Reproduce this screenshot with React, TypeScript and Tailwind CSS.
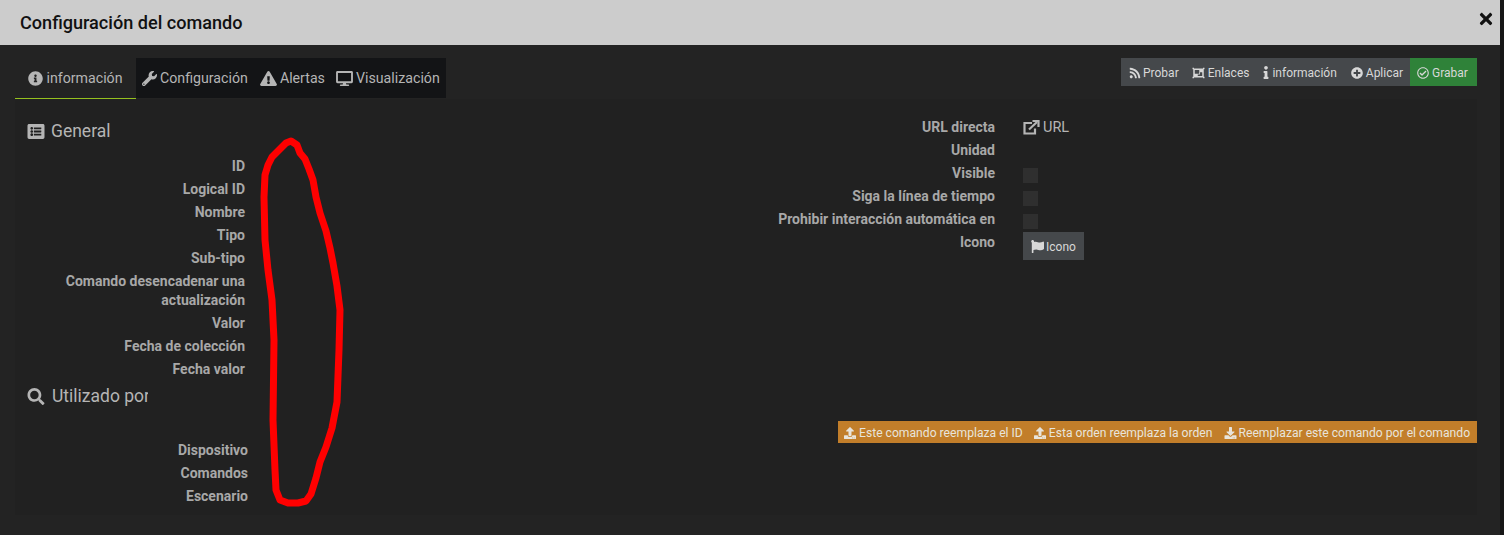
import React from "react";
import { FaInfoCircle, FaWrench, FaExclamationTriangle, FaDesktop, FaListAlt, FaSearch, FaRss, FaObjectGroup, FaInfo, FaPlusCircle, FaRegCheckCircle, FaFlag, FaUpload, FaDownload, FaTimes } from "react-icons/fa";

const font = "font-['Roboto',sans-serif]";

function Row({ label }: { label: React.ReactNode }) {
  return <div className="text-right font-bold text-[14px] leading-[19px] text-[#a8a8a8] mb-[4px]">{label}</div>;
}

function Btn({ icon, children, cls = "" }: { icon: React.ReactNode; children: React.ReactNode; cls?: string }) {
  return <span className={`flex items-center gap-[3px] ${cls}`}>{icon}{children}</span>;
}

export default function App() {
  return (
    <div className={`relative w-[1504px] h-[535px] overflow-hidden bg-[#161616] ${font}`}>
      <div className="w-[1500px] h-[45px] bg-[#cccccc] flex items-center justify-between pl-[20px] pr-[6px]">
        <span className="text-[18.1px] font-medium text-[#111111]">Configuración del comando</span>
        <FaTimes className="text-[#111] w-[18px] h-[18px] mb-[7px] mr-[-1px]" />
      </div>
      <div className="w-[1500px] h-[490px] bg-[#232323] pl-[15px] pr-[23px] pt-[13px] flex flex-col">
        <div className="flex justify-between items-start h-[41px]">
          <div className="flex h-[41px]">
            <div className="w-[121px] h-[41px] border-b border-[#95c11f] flex items-center justify-center gap-[3px] text-[14.2px] text-[#b5b5b5] pt-[1px]">
              <FaInfoCircle className="w-[15px] h-[15px]" />información
            </div>
            <div className="flex h-[40px] items-center bg-[#131416] text-[14.2px] text-[#b5b5b5] w-[310px] pl-[6px] pt-[1px]">
              <Btn icon={<FaWrench className="w-[15px] h-[15px]" />} cls="mr-[12px]">Configuración</Btn>
              <Btn icon={<FaExclamationTriangle className="w-[17px] h-[15px]" />} cls="mr-[11px]">Alertas</Btn>
              <Btn icon={<FaDesktop className="w-[17px] h-[15px]" />}>Visualización</Btn>
            </div>
          </div>
          <div className="flex h-[28px] text-[12px] text-[#d8d8d8] pt-[1px] bg-[#45484b]">
            <div className="flex items-center pl-[8px] w-[289px]">
              <span className="flex items-center gap-[2px] mr-[13px]"><FaRss className="w-[12px] h-[12px]" />Probar</span>
              <Btn icon={<FaObjectGroup className="w-[13px] h-[12px]" />} cls="mr-[14px]">Enlaces</Btn>
              <Btn icon={<FaInfo className="w-[6px] h-[13px]" />} cls="mr-[14px]">información</Btn>
              <Btn icon={<FaPlusCircle className="w-[12px] h-[12px]" />}>Aplicar</Btn>
            </div>
            <div className="flex items-center bg-[#2f8239] pl-[7px] w-[67px] mt-[-1px] pt-[1px]">
              <Btn icon={<FaRegCheckCircle className="w-[12px] h-[12px]" />}>Grabar</Btn>
            </div>
          </div>
        </div>
        <div className="flex bg-[#212121] h-[416px] pt-[20px] pl-[12px]">
          <div className="w-[218px] shrink-0">
            <div className="flex items-center gap-[5px] text-[17.5px] leading-[24px] text-[#b5b5b5] mb-[14px] h-[24px] ml-[-1px]">
              <FaListAlt className="w-[20px] h-[17px]" />General
            </div>
            {["ID", "Logical ID", "Nombre", "Tipo", "Sub-tipo"].map((t) => <Row key={t} label={t} />)}
            <Row label={<>Comando desencadenar una<br />actualización</>} />
            {["Valor", "Fecha de colección", "Fecha valor"].map((t) => <Row key={t} label={t} />)}
            <div className="flex items-center gap-[7px] text-[17.5px] leading-[24px] text-[#b5b5b5] h-[24px] mt-[5px] whitespace-nowrap w-[121px] overflow-hidden">
              <FaSearch className="w-[18px] h-[17px] shrink-0" />Utilizado por
            </div>
            <div className="w-[221px] mt-[33px]">
              {["Dispositivo", "Comandos", "Escenario"].map((t) => <Row key={t} label={t} />)}
            </div>
          </div>
          <div className="flex-1 relative">
            <div className="flex flex-col items-stretch ml-[497px] mt-[-1px] w-[500px]">
              <div className="flex h-[23px] items-start">
                <div className="w-[253px] text-right font-bold text-[14px] leading-[19px] text-[#a8a8a8]">URL directa</div>
                <div className="ml-[28px] flex items-center gap-[3px] text-[14.5px] leading-[19px] text-[#b5b5b5]">
                  <svg viewBox="0 0 17 15" className="w-[17px] h-[15px]" fill="none" stroke="currentColor" strokeWidth="2.2">
                    <path d="M9 3H1.5v10.5h10.5V8.5" />
                    <path d="M6 9.5L14 2" />
                    <path d="M9.5 1h6v6" />
                  </svg>
                  URL
                </div>
              </div>
              <div className="flex h-[23px] items-start">
                <div className="w-[253px] text-right font-bold text-[14px] leading-[19px] text-[#a8a8a8]">Unidad</div>
              </div>
              {["Visible", "Siga la línea de tiempo", "Prohibir interacción automática en"].map((t) => (
                <div key={t} className="flex h-[23px] items-start">
                  <div className="w-[253px] whitespace-nowrap text-right font-bold text-[14px] leading-[19px] text-[#a8a8a8]">{t}</div>
                  <div className="ml-[28px] mt-[4px] w-[15px] h-[15px] bg-[#2f2f2f]" />
                </div>
              ))}
              <div className="flex items-start">
                <div className="w-[253px] text-right font-bold text-[14px] leading-[19px] text-[#a8a8a8]">Icono</div>
                <div className="ml-[28px] mt-[-1px] w-[61px] h-[28px] bg-[#45484b] flex items-center justify-center gap-[2px] pt-[1px] text-[12px] text-[#d8d8d8]"><FaFlag className="w-[13px] h-[13px]" />Icono</div>
              </div>
            </div>
            <div className="absolute top-[302px] right-0 h-[22px] w-[639px] bg-[#c27e2a] flex items-center pl-[6px] pt-[2px] text-[12.15px] text-[#e8e4dc]">
              <Btn icon={<FaUpload className="w-[12px] h-[12px]" />} cls="mr-[11px]">Este comando reemplaza el ID</Btn>
              <Btn icon={<FaUpload className="w-[12px] h-[12px]" />} cls="mr-[12px]">Esta orden reemplaza la orden</Btn>
              <span className="flex items-center gap-[2px] ml-[-1px]"><FaDownload className="w-[13px] h-[12px]" />Reemplazar este comando por el comando</span>
            </div>
          </div>
        </div>
      </div>
      <svg className="absolute left-0 top-0 pointer-events-none" width="1504" height="535" fill="none">
        <path d="M268 165 L272 157 L279 150 L286 143 L291 141 L297 145 L300 153 L305 159 L309 169 L313 180 L316 197 L320 213 L326 231 L330 248 L333 263 L337 286 L340 310 L339 350 L337 402 L332 428 L326 447 L320 462 L316 478 L311 494 L306 501 L298 503 L288 503 L280 500 L276 490 L275 470 L273 420 L274 340 L272 300 L268 270 L265 240 L264 197 L265 175 Z" stroke="#ff0000" strokeWidth="7" strokeLinejoin="round" />
      </svg>
    </div>
  );
}
